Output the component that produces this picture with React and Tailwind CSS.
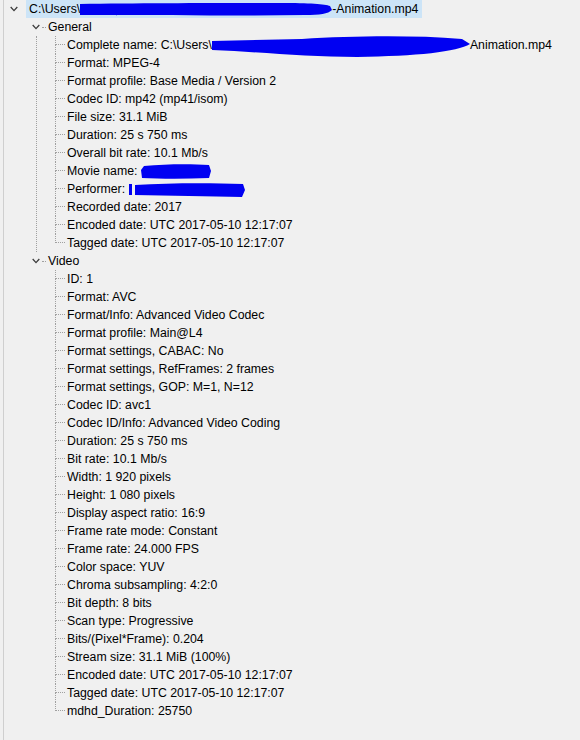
import React from "react";

const DOT = "border-dotted border-[#a0a0a0]";

function Chevron() {
  return (
    <svg width="8" height="6" viewBox="0 0 8 6" className="block">
      <polyline points="0.7,1 4,4.6 7.3,1" fill="none" stroke="#3c3c3c" strokeWidth="1.3" />
    </svg>
  );
}

function Scribble({ w, d }) {
  return (
    <svg width={w} height="18" viewBox={`0 0 ${w} 18`} className="inline-block align-top overflow-visible">
      <path d={d} fill="#0000f2" />
    </svg>
  );
}

function Leaf({ children, last }) {
  return (
    <div className="flex h-[18px]">
      <div className="w-[10px] shrink-0 flex flex-col">
        <div className={`h-[9px] border-l border-b ${DOT}`} />
        {!last && <div className={`h-[9px] border-l ${DOT}`} />}
      </div>
      <div className="pl-[2px] leading-[18px] whitespace-nowrap">{children}</div>
    </div>
  );
}

function Node({ label, items, last }) {
  return (
    <div>
      <div className="flex h-[18px] items-center">
        <div className="w-[26px] shrink-0" />
        <div className="w-[12px] shrink-0 flex items-center pl-[2px]">
          <Chevron />
        </div>
        <div className={`w-[4px] h-0 border-t ${DOT}`} />
        <span className="pl-[2px] leading-[18px]">{label}</span>
      </div>
      <div className="flex">
        <div className="w-[32px] shrink-0" />
        <div className={`w-[19px] shrink-0 ${last ? "" : `border-l ${DOT}`}`} />
        <div>
          {items.map((it, i) => (
            <Leaf key={i} last={i === items.length - 1}>
              {it}
            </Leaf>
          ))}
        </div>
      </div>
    </div>
  );
}

const general = [
  <>
    Complete name: C:\Users\
    <Scribble
      w={258}
      d="M0 5 C30 4, 60 4, 90 3 C140 0, 200 -1, 250 3 L258 8 C245 16, 205 20, 145 21 C95 21, 50 16, 0 14 Z"
    />
    Animation.mp4
  </>,
  "Format: MPEG-4",
  "Format profile: Base Media / Version 2",
  "Codec ID: mp42 (mp41/isom)",
  "File size: 31.1 MiB",
  "Duration: 25 s 750 ms",
  "Overall bit rate: 10.1 Mb/s",
  <>
    Movie name:{" "}
    <Scribble w={70} d="M3 4 C25 2, 50 2, 68 3 L70 9 L68 16 C45 17, 20 17, 1 16 L0 8 Z" />
  </>,
  <>
    Performer:{" "}
    <Scribble
      w={116}
      d="M0 4 L3 4 L3 15 L0 15 Z M6 5 C40 3, 80 3, 114 4 L116 10 L113 17 C80 16, 40 16, 6 15 Z"
    />
  </>,
  "Recorded date: 2017",
  "Encoded date: UTC 2017-05-10 12:17:07",
  "Tagged date: UTC 2017-05-10 12:17:07",
];

const video = [
  "ID: 1",
  "Format: AVC",
  "Format/Info: Advanced Video Codec",
  "Format profile: Main@L4",
  "Format settings, CABAC: No",
  "Format settings, RefFrames: 2 frames",
  "Format settings, GOP: M=1, N=12",
  "Codec ID: avc1",
  "Codec ID/Info: Advanced Video Coding",
  "Duration: 25 s 750 ms",
  "Bit rate: 10.1 Mb/s",
  "Width: 1 920 pixels",
  "Height: 1 080 pixels",
  "Display aspect ratio: 16:9",
  "Frame rate mode: Constant",
  "Frame rate: 24.000 FPS",
  "Color space: YUV",
  "Chroma subsampling: 4:2:0",
  "Bit depth: 8 bits",
  "Scan type: Progressive",
  "Bits/(Pixel*Frame): 0.204",
  "Stream size: 31.1 MiB (100%)",
  "Encoded date: UTC 2017-05-10 12:17:07",
  "Tagged date: UTC 2017-05-10 12:17:07",
  "mdhd_Duration: 25750",
];

export default function App() {
  return (
    <div className="w-[580px] h-[740px] bg-[#f0f0f0] overflow-hidden font-['Liberation_Sans',Arial,sans-serif] text-[12.3px] text-black">
      <div className="ml-[3px] h-full border-l border-[#cfcfcf]">
        <div className="flex h-[18px] items-center">
          <div className="w-[22px] shrink-0 pl-[6px] flex items-center">
            <Chevron />
          </div>
          <div className="h-[18px] bg-[#cce4f7] pl-[3px] pr-[4px] leading-[18px] whitespace-nowrap">
            C:\Users\
            <Scribble
              w={252}
              d="M0 4 C60 3, 140 3, 200 3 C230 3, 245 4, 250 6 L252 10 C248 14, 240 15, 225 15 C150 16, 70 15, 0 15 Z"
            />
            -Animation.mp4
          </div>
        </div>
        <Node label="General" items={general} />
        <Node label="Video" items={video} last />
      </div>
    </div>
  );
}
